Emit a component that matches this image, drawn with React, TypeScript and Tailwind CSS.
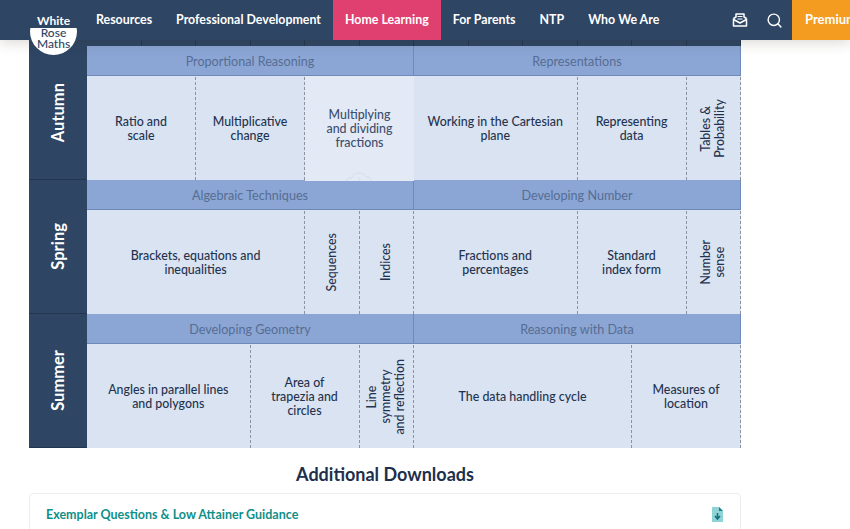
import { Search } from "lucide-react";

interface Topic {
  title: string[];
  span: string;
  vertical?: boolean;
  active?: boolean;
}

interface Group {
  name: string;
  topics: Topic[];
}

interface Term {
  name: string;
  groups: Group[];
}

const terms: Term[] = [
  {
    name: "Autumn",
    groups: [
      {
        name: "Proportional Reasoning",
        topics: [
          { title: ["Ratio and", "scale"], span: "col-span-2" },
          { title: ["Multiplicative", "change"], span: "col-span-2" },
          { title: ["Multiplying", "and dividing", "fractions"], span: "col-span-2", active: true },
        ],
      },
      {
        name: "Representations",
        topics: [
          { title: ["Working in the Cartesian", "plane"], span: "col-span-3" },
          { title: ["Representing", "data"], span: "col-span-2" },
          { title: ["Tables &", "Probability"], span: "col-span-1", vertical: true },
        ],
      },
    ],
  },
  {
    name: "Spring",
    groups: [
      {
        name: "Algebraic Techniques",
        topics: [
          { title: ["Brackets, equations and", "inequalities"], span: "col-span-4" },
          { title: ["Sequences"], span: "col-span-1", vertical: true },
          { title: ["Indices"], span: "col-span-1", vertical: true },
        ],
      },
      {
        name: "Developing Number",
        topics: [
          { title: ["Fractions and", "percentages"], span: "col-span-3" },
          { title: ["Standard", "index form"], span: "col-span-2" },
          { title: ["Number", "sense"], span: "col-span-1", vertical: true },
        ],
      },
    ],
  },
  {
    name: "Summer",
    groups: [
      {
        name: "Developing Geometry",
        topics: [
          { title: ["Angles in parallel lines", "and polygons"], span: "col-span-3" },
          { title: ["Area of", "trapezia and", "circles"], span: "col-span-2" },
          { title: ["Line", "symmetry", "and reflection"], span: "col-span-1", vertical: true },
        ],
      },
      {
        name: "Reasoning with Data",
        topics: [
          { title: ["The data handling cycle"], span: "col-span-4" },
          { title: ["Measures of", "location"], span: "col-span-2" },
        ],
      },
    ],
  },
];

const navItems = ["Resources", "Professional Development", "Home Learning", "For Parents", "NTP", "Who We Are"];

function MailIcon() {
  return (
    <svg width="16" height="16" viewBox="0 0 16 16" fill="none" stroke="white" strokeWidth="1.5" strokeLinejoin="round">
      <path d="M1.5 6.5v7.5h13V6.5" />
      <path d="M1.5 6.5 4 5V2h8v3l2.5 1.5" />
      <path d="M1.5 7.5 8 11l6.5-3.5" />
      <path d="M5.5 4.5h5M5.5 7h5" strokeWidth="1.2" />
    </svg>
  );
}

function Logo() {
  return (
    <div className="absolute left-[30px] top-[8px] z-30 flex h-[47px] w-[47px] flex-col items-center overflow-hidden rounded-full bg-[#2e4564] text-center font-['Lato',sans-serif]">
      <div className="flex h-[20px] shrink-0 items-end text-[12px] font-bold leading-[14px] text-white">White</div>
      <div className="flex h-[27px] w-full flex-col items-center bg-white text-[12px] font-medium leading-[10.5px] text-[#2e4564]">
        <span>Rose</span>
        <span>Maths</span>
      </div>
    </div>
  );
}

function TopicCell({ topic }: { topic: Topic }) {
  if (topic.active) {
    return (
      <div className={`${topic.span} relative z-10 -my-px flex items-center justify-center overflow-hidden bg-[#e4eaf5] text-center text-[#3b4f6e]`}>
        <div>
          {topic.title.map((line) => (
            <div key={line}>{line}</div>
          ))}
        </div>
        <svg className="absolute bottom-[-4px] left-[39px]" width="30" height="16" viewBox="0 0 30 16" fill="none" stroke="#d6deeb" strokeWidth="1">
          <path d="M3 16c-3-5 1-8 5-7 1-6 12-7 14-1 5-1 7 4 5 8" />
          <path d="M15 8v8" />
        </svg>
      </div>
    );
  }
  return (
    <div className={`${topic.span} flex items-center justify-center border-r border-dashed border-[#8d939e] text-center`}>
      <div className={topic.vertical ? "rotate-180 [writing-mode:vertical-rl]" : ""}>
        {topic.title.map((line) => (
          <div key={line}>{line}</div>
        ))}
      </div>
    </div>
  );
}

function TermRow({ term }: { term: Term }) {
  return (
    <div className="flex h-[134px]">
      <div className="flex w-[58px] shrink-0 items-center justify-center border-b border-[#22364f] bg-[#2e4564]">
        <span className="rotate-180 text-[16.5px] font-bold text-white [writing-mode:vertical-rl]">{term.name}</span>
      </div>
      <div className="grid flex-1 grid-cols-2">
        {term.groups.map((group) => (
          <div key={group.name} className="flex min-w-0 flex-col">
            <div className="flex h-[30px] shrink-0 items-center justify-center border-r border-b border-[#6f8ab8] bg-[#8ba6d5] pt-[3px] text-[12.6px] text-[#566d93]">
              {group.name}
            </div>
            <div className="grid flex-1 grid-cols-6 bg-[#dae3f1] pt-[1px] text-[12.4px] font-medium leading-[14px] text-[#1f3350]">
              {group.topics.map((topic) => (
                <TopicCell key={topic.title.join(" ")} topic={topic} />
              ))}
            </div>
          </div>
        ))}
      </div>
    </div>
  );
}

export default function App() {
  return (
    <div className="relative h-[529px] w-[850px] overflow-hidden bg-white font-['Lato',sans-serif]">
      <Logo />
      <header className="relative z-20 flex h-[40px] items-stretch bg-[#2e4564] pl-[84px] text-[12.4px] font-bold text-white shadow-[0_3px_12px_rgba(60,50,30,0.18)]">
        {navItems.map((item) => (
          <a key={item} className={`flex items-center px-3 ${item === "Home Learning" ? "bg-[#e0406f]" : ""}`}>
            {item}
          </a>
        ))}
        <div className="ml-auto flex items-center gap-[18px] pr-[9px]">
          <MailIcon />
          <Search size={17} strokeWidth={2} />
        </div>
        <a className="flex w-[58px] items-center overflow-hidden whitespace-nowrap bg-[#f39c1f] pl-[13px] text-[13px]">Premium</a>
      </header>

      <main className="mx-[29px] w-[712px]">
        <div className="flex h-[6px] bg-[#2e4564]">
          <div className="w-[58px]" />
          <div className="grid flex-1 grid-cols-12">
            {Array.from({ length: 12 }, (_, i) => (
              <div key={i} className="border-r border-[#22364f]" />
            ))}
          </div>
        </div>
        {terms.map((term) => (
          <TermRow key={term.name} term={term} />
        ))}
        <h2 className="mt-[13px] text-center text-[18px] font-bold leading-[26px] text-[#1d2f4c]">Additional Downloads</h2>
        <div className="mt-[6px] flex h-[60px] items-start justify-between rounded-[4px] border border-[#ececec] pl-[16px] pr-[17px] pt-[12px]">
          <span className="text-[12.5px] font-bold leading-[18px] text-[#0f8f8a]">Exemplar Questions &amp; Low Attainer Guidance</span>
          <svg width="11" height="15" viewBox="0 0 11 15" className="mt-[1px]">
            <path d="M0 0h7l4 4v11H0z" fill="#8fd3d6" />
            <path d="M7 0l4 4H7z" fill="#1b7f86" />
            <path d="M5.5 6v5M3 9l2.5 3L8 9" fill="none" stroke="#14707a" strokeWidth="1.6" />
          </svg>
        </div>
      </main>
    </div>
  );
}
